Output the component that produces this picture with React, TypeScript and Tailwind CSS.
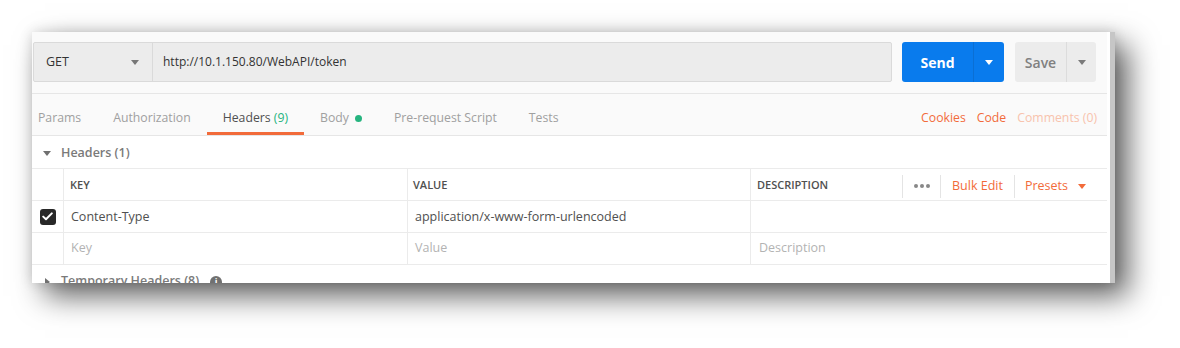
import React from "react";

const font = { fontFamily: '"Open Sans", "Noto Sans", sans-serif' };

function Caret({ color = "#6b6b6b", dir = "down" }: { color?: string; dir?: "down" | "right" }) {
  if (dir === "right") {
    return (
      <svg width="5" height="8" viewBox="0 0 5 8">
        <path d="M0 0 L5 4 L0 8 Z" fill={color} />
      </svg>
    );
  }
  return (
    <svg width="8" height="5" viewBox="0 0 8 5">
      <path d="M0 0 L8 0 L4 5 Z" fill={color} />
    </svg>
  );
}

const tabs = [
  { label: "Params" },
  { label: "Authorization" },
  { label: "Headers", count: "(9)", active: true },
  { label: "Body", dot: true },
  { label: "Pre-request Script" },
  { label: "Tests" },
];

export default function App() {
  return (
    <div className="w-[1180px] h-[348px] bg-white pt-[32px] pl-[32px] overflow-hidden" style={font}>
      <div className="w-[1083px] h-[251px] flex bg-[#fafafa] overflow-hidden shadow-[13px_13px_28px_rgba(0,0,0,0.62),0_0_12px_rgba(0,0,0,0.14)]">
        <div className="w-[1075px] flex flex-col shrink-0">
          {/* request bar */}
          <div className="h-[62px] shrink-0 flex items-start pt-[10px] pl-[1px] border-b border-[#e6e6e6]">
            <div className="w-[859px] h-[40px] flex bg-[#ececec] border border-[#dadada] rounded-[2px]">
              <div className="w-[119px] flex items-center justify-between pl-[12px] pr-[13px] border-r border-[#dadada]">
                <span className="text-[12.5px] text-[#333]">GET</span>
                <Caret color="#777" />
              </div>
              <div className="flex-1 flex items-center pl-[10px] text-[12px] text-[#333]">
                http://10.1.150.80/WebAPI/token
              </div>
            </div>
            <div className="ml-[10px] w-[102px] h-[40px] flex rounded-[3px] bg-[#097bed] text-white">
              <div className="w-[71px] flex items-center justify-center text-[14px] font-bold">Send</div>
              <div className="flex-1 flex items-center justify-center border-l border-[#0a6fd4]">
                <Caret color="#ffffff" />
              </div>
            </div>
            <div className="ml-[11px] w-[81px] h-[40px] flex rounded-[3px] bg-[#ececec]">
              <div className="w-[51px] flex items-center justify-center text-[14px] font-semibold text-[#808080]">Save</div>
              <div className="flex-1 flex items-center justify-center border-l border-[#dcdcdc]">
                <Caret color="#7a7a7a" />
              </div>
            </div>
          </div>

          {/* tabs */}
          <div className="h-[42px] shrink-0 flex items-stretch border-b border-[#e6e6e6]">
            <div className="flex -ml-[10px]">
              {tabs.map((t) => (
                <div
                  key={t.label}
                  className={`px-4 pt-[10px] flex items-center gap-[6px] text-[12.25px] border-b-[3px] ${
                    t.active ? "border-[#f26b3a] text-[#505050]" : "border-transparent text-[#a0a0a0]"
                  }`}
                >
                  <span>
                    {t.label}
                    {t.count && <span className="text-[#26b47f]"> {t.count}</span>}
                  </span>
                  {t.dot && <span className="w-[7px] h-[7px] rounded-full bg-[#26b47f]" />}
                </div>
              ))}
            </div>
            <div className="ml-auto flex items-center pt-[7px] gap-[11px] pr-[10px] text-[12.25px]">
              <span className="text-[#f26b3a]">Cookies</span>
              <span className="text-[#f26b3a]">Code</span>
              <span className="text-[#f8c3ad]">Comments (0)</span>
            </div>
          </div>

          {/* headers section */}
          <div className="flex-1 bg-white flex flex-col">
            <div className="h-[33px] shrink-0 flex items-center pt-[2px] pl-[11px] gap-[10px] border-b border-[#ebebeb]">
              <Caret color="#707070" />
              <span className="text-[12.5px] font-semibold text-[#7a7a7a]">Headers (1)</span>
            </div>

            <div className="h-[32px] shrink-0 flex border-b border-[#ebebeb] text-[11px] font-semibold text-[#505050]">
              <div className="w-[32px] border-r border-[#ebebeb]" />
              <div className="w-[344px] flex items-center pl-[6px] pt-[1px] border-r border-[#ebebeb]">KEY</div>
              <div className="w-[343px] flex items-center pl-[5px] pt-[1px] border-r border-[#ebebeb]">VALUE</div>
              <div className="flex-1 flex items-center pl-[6px]">
                <span className="pt-[1px]">DESCRIPTION</span>
                <div className="ml-auto flex items-center h-[23px] mt-[3px] pr-[21px]">
                  <div className="h-full border-l border-[#e4e4e4] pl-[11px] pr-[10px] flex items-center gap-[2px]">
                    <span className="w-[4px] h-[4px] rounded-full bg-[#888]" />
                    <span className="w-[4px] h-[4px] rounded-full bg-[#888]" />
                    <span className="w-[4px] h-[4px] rounded-full bg-[#888]" />
                  </div>
                  <div className="h-full border-l border-[#e4e4e4] px-[11px] flex items-center text-[12.5px] font-normal text-[#f26b3a]">
                    Bulk Edit
                  </div>
                  <div className="h-full border-l border-[#e4e4e4] pl-[10px] flex items-center gap-[10px] text-[12.5px] font-normal text-[#f26b3a]">
                    <span>Presets</span>
                    <Caret color="#f26b3a" />
                  </div>
                </div>
              </div>
            </div>

            <div className="h-[32px] shrink-0 flex border-b border-[#ebebeb] text-[12.5px] text-[#505050]">
              <div className="w-[32px] flex items-center justify-center border-r border-[#ebebeb]">
                <div className="w-[16px] h-[16px] rounded-[3px] bg-[#282828] flex items-center justify-center">
                  <svg width="11" height="9" viewBox="0 0 11 9">
                    <path d="M1.2 4.6 L4 7.3 L9.8 1.4" stroke="#fff" strokeWidth="2" fill="none" strokeLinecap="round" strokeLinejoin="round" />
                  </svg>
                </div>
              </div>
              <div className="w-[344px] flex items-center pl-[7px] pt-[1px] border-r border-[#ebebeb]">Content-Type</div>
              <div className="w-[343px] flex items-center pl-[7px] pt-[1px] border-r border-[#ebebeb]">application/x-www-form-urlencoded</div>
              <div className="flex-1" />
            </div>

            <div className="h-[32px] shrink-0 flex border-b border-[#ebebeb] text-[12.5px] text-[#b3b3b3]">
              <div className="w-[32px] border-r border-[#ebebeb]" />
              <div className="w-[344px] flex items-center pl-[7px] border-r border-[#ebebeb]">Key</div>
              <div className="w-[343px] flex items-center pl-[7px] border-r border-[#ebebeb]">Value</div>
              <div className="flex-1 flex items-center pl-[8px]">Description</div>
            </div>

            <div className="h-[33px] shrink-0 flex items-center pl-[13px] gap-[11px]">
              <Caret color="#707070" dir="right" />
              <span className="text-[12.5px] font-semibold text-[#7a7a7a]">Temporary Headers (8)</span>
              <span className="w-[12px] h-[12px] rounded-full bg-[#707070] flex items-center justify-center text-white text-[9px] font-bold leading-none">
                i
              </span>
            </div>
          </div>
        </div>
        <div className="w-[3px] bg-white shrink-0" />
        <div className="w-[5px] bg-[#c6c6c6] shrink-0" />
      </div>
    </div>
  );
}
